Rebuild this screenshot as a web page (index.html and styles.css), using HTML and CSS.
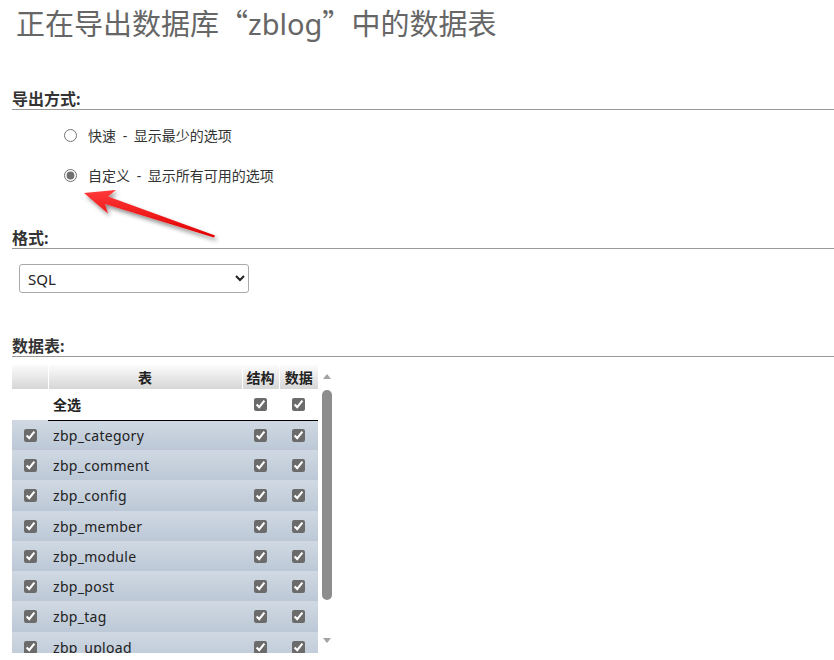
FILE: index.html
```html
<!DOCTYPE html>
<html lang="zh-CN">
<head>
<meta charset="utf-8">
<title>导出数据表</title>
<link rel="stylesheet" href="styles.css">
</head>
<body>
<div class="page">
  <h1 class="title">正在导出数据库<span class="cjk-quote">“</span>zblog<span class="cjk-quote">”</span>中的数据表</h1>

  <section class="group">
    <h2 class="group-title">导出方式:</h2>
    <ul class="options">
      <li><label class="option"><input type="radio" name="method">快速 - 显示最少的选项</label></li>
      <li><label class="option"><input type="radio" name="method" checked>自定义 - 显示所有可用的选项</label></li>
    </ul>
  </section>

  <section class="group group-format">
    <h2 class="group-title">格式:</h2>
    <select class="format-select">
      <option>SQL</option>
      <option>CSV</option>
      <option>JSON</option>
      <option>XML</option>
    </select>
  </section>

  <section class="group group-tables">
    <h2 class="group-title">数据表:</h2>
    <div class="table-frame">
      <div class="table-view">
        <table class="tables">
          <colgroup>
            <col class="c-select"><col class="c-name"><col class="c-struct"><col class="c-data">
          </colgroup>
          <thead>
            <tr><th></th><th>表</th><th>结构</th><th>数据</th></tr>
          </thead>
          <tbody>
            <tr class="all-row">
              <td></td>
              <td class="name">全选</td>
              <td class="chk"><input type="checkbox" checked></td>
              <td class="chk"><input type="checkbox" checked></td>
            </tr>
            <tr><td class="chk"><input type="checkbox" checked></td><td class="name">zbp_category</td><td class="chk"><input type="checkbox" checked></td><td class="chk"><input type="checkbox" checked></td></tr>
            <tr><td class="chk"><input type="checkbox" checked></td><td class="name">zbp_comment</td><td class="chk"><input type="checkbox" checked></td><td class="chk"><input type="checkbox" checked></td></tr>
            <tr><td class="chk"><input type="checkbox" checked></td><td class="name">zbp_config</td><td class="chk"><input type="checkbox" checked></td><td class="chk"><input type="checkbox" checked></td></tr>
            <tr><td class="chk"><input type="checkbox" checked></td><td class="name">zbp_member</td><td class="chk"><input type="checkbox" checked></td><td class="chk"><input type="checkbox" checked></td></tr>
            <tr><td class="chk"><input type="checkbox" checked></td><td class="name">zbp_module</td><td class="chk"><input type="checkbox" checked></td><td class="chk"><input type="checkbox" checked></td></tr>
            <tr><td class="chk"><input type="checkbox" checked></td><td class="name">zbp_post</td><td class="chk"><input type="checkbox" checked></td><td class="chk"><input type="checkbox" checked></td></tr>
            <tr><td class="chk"><input type="checkbox" checked></td><td class="name">zbp_tag</td><td class="chk"><input type="checkbox" checked></td><td class="chk"><input type="checkbox" checked></td></tr>
            <tr><td class="chk"><input type="checkbox" checked></td><td class="name">zbp_upload</td><td class="chk"><input type="checkbox" checked></td><td class="chk"><input type="checkbox" checked></td></tr>
          </tbody>
        </table>
      </div>
      <div class="scrollbar" aria-hidden="true">
        <span class="scroll-arrow up"></span>
        <span class="scroll-thumb"></span>
        <span class="scroll-space"></span>
        <span class="scroll-arrow down"></span>
      </div>
    </div>
  </section>
</div>

<!-- red callout arrow pointing at the custom option -->
<svg class="callout" width="834" height="660" viewBox="0 0 834 660" aria-hidden="true">
  <defs>
    <filter id="arrowShadow" x="-20%" y="-40%" width="140%" height="180%">
      <feDropShadow dx="2" dy="3" stdDeviation="2" flood-color="#000" flood-opacity="0.45"/>
    </filter>
    <linearGradient id="arrowFill" x1="0" y1="0" x2="0" y2="1">
      <stop offset="0" stop-color="#ff3a3a"/>
      <stop offset="1" stop-color="#e00000"/>
    </linearGradient>
  </defs>
  <polygon filter="url(#arrowShadow)" fill="url(#arrowFill)"
    points="84,193 116,190 108,196.5 215,235.5 214,237.5 105,204 108,213.5"/>
</svg>
</body>
</html>
```

FILE: styles.css
```css
* {
  box-sizing: border-box;
}

body {
  margin: 0;
  background: #fff;
  color: #333;
  font-family: "Noto Sans", "Noto Sans CJK SC", sans-serif;
}

.page {
  padding: 2px 0 0 12px;
}

.title {
  margin: 0 0 47px 4px;
  height: 40px;
  font-size: 29px;
  font-weight: normal;
  line-height: 40px;
  color: #666;
  white-space: nowrap;
}

.cjk-quote {
  font-family: "Noto Sans CJK SC", sans-serif;
}

.group-title {
  margin: 0;
  font-size: 16px;
  font-weight: bold;
  line-height: 20px;
  color: #333;
  border-bottom: 1px solid #999;
}

.group-format,
.group-tables {
  margin-top: 43px;
}

/* export method radios */
.options {
  list-style: none;
  margin: 15px 0 0;
  padding: 0 0 0 52px;
  display: flex;
  flex-direction: column;
  gap: 20px;
}

.option {
  display: flex;
  align-items: center;
  gap: 11px;
  height: 20px;
  font-size: 14px;
  word-spacing: 3px;
  color: #333;
}

.option input {
  margin: 0;
  width: 13px;
  height: 13px;
  accent-color: #6f6f6f;
}

/* format dropdown */
.format-select {
  display: block;
  margin: 15px 0 0 7px;
  width: 230px;
  height: 29px;
  padding: 0 4px;
  border: 1px solid #aaa;
  border-radius: 3px;
  background: #fff;
  color: #222;
  font-family: "Noto Sans", "Noto Sans CJK SC", sans-serif;
  font-size: 15px;
}

/* table list */
.table-frame {
  margin-top: 8px;
  display: flex;
  gap: 2px;
  width: 321px;
  height: 288px;
}

.table-view {
  width: 306px;
  overflow: hidden;
}

.tables {
  width: 306px;
  border-collapse: collapse;
  table-layout: fixed;
  font-size: 14px;
  color: #222;
}

.c-select { width: 36px; }
.c-name { width: 194px; }
.c-struct { width: 37px; }
.c-data { width: 39px; }

.tables thead tr {
  height: 24px;
}

.tables th {
  padding: 0;
  font-weight: bold;
  text-align: center;
  color: #222;
  background: linear-gradient(#fbfbfb, #d6d6d6);
}

.tables th + th {
  border-left: 1px solid #fff;
}

.tables td {
  padding: 0;
  vertical-align: middle;
}

.tables tbody tr {
  height: 30.3px;
  background: linear-gradient(#d0d9e3, #bcc8d6);
}

.tables tbody tr.all-row {
  height: 31px;
  background: #fff;
}

.all-row td + td {
  border-bottom: 1px solid #000;
}

.all-row .name {
  font-weight: bold;
  letter-spacing: 0;
}

.name {
  padding-left: 5px !important;
  letter-spacing: 0.3px;
  white-space: nowrap;
}

.chk {
  text-align: center;
  line-height: 0;
}

.chk input {
  margin: 0;
  width: 13px;
  height: 13px;
  accent-color: #6b6b6b;
}

/* drawn scrollbar beside the list */
.scrollbar {
  width: 13px;
  display: flex;
  flex-direction: column;
  align-items: center;
}

.scroll-arrow {
  width: 0;
  height: 0;
  border-left: 4px solid transparent;
  border-right: 4px solid transparent;
}

.scroll-arrow.up {
  margin-top: 9px;
  border-bottom: 5px solid #a3a3a3;
}

.scroll-arrow.down {
  margin-bottom: 10px;
  border-top: 5px solid #a3a3a3;
}

.scroll-thumb {
  margin-top: 11px;
  width: 10px;
  height: 210px;
  border-radius: 5px;
  background: #8d8d8d;
}

.scroll-space {
  flex: 1;
}

.callout {
  position: absolute;
  top: 0;
  left: 0;
  pointer-events: none;
}
```
